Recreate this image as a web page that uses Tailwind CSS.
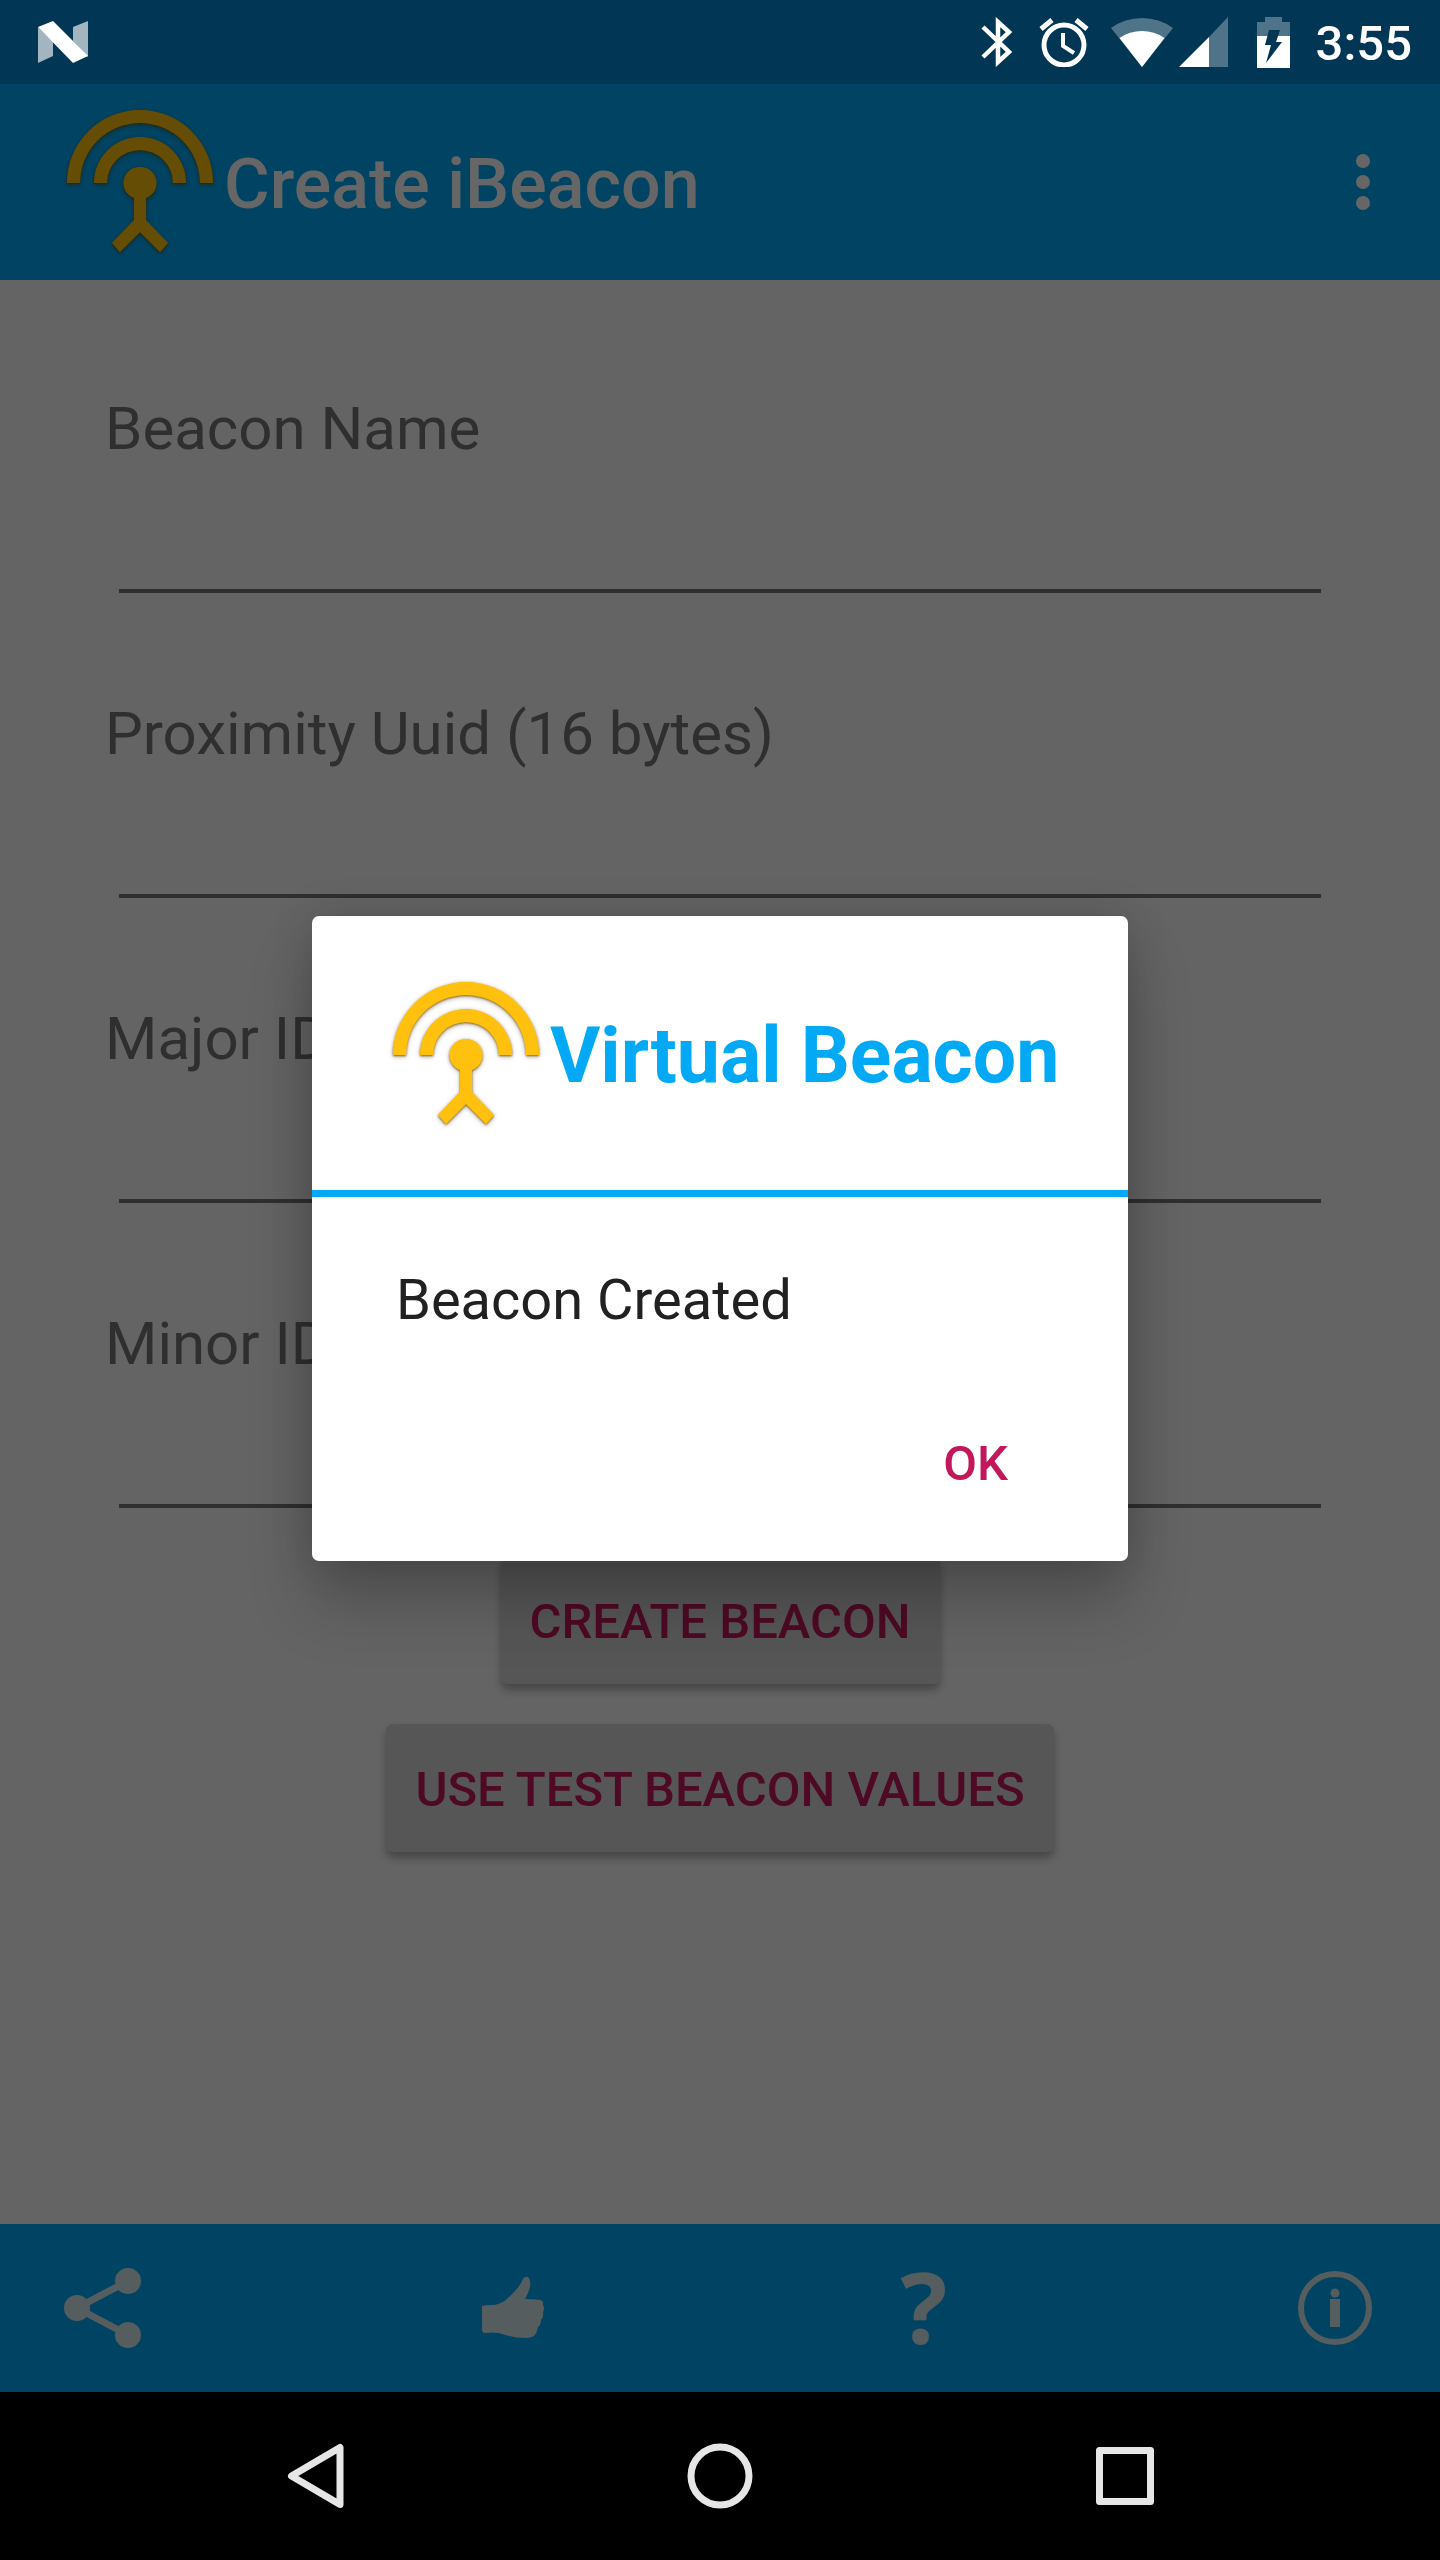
<!DOCTYPE html>
<html lang="en">
<head>
<meta charset="utf-8">
<meta name="viewport" content="width=device-width, initial-scale=1">
<title>Create iBeacon</title>
<script src="https://cdn.jsdelivr.net/npm/@tailwindcss/browser@4"></script>
</head>
<body class="flex min-h-screen flex-col bg-black font-[Roboto,sans-serif]">

<!-- Shared beacon logo -->
<svg class="absolute size-0" aria-hidden="true">
  <defs>
    <filter id="bevel" x="-10%" y="-10%" width="120%" height="120%">
      <feDropShadow dx="0" dy="1" stdDeviation="1" flood-color="#7a5200" flood-opacity=".9" result="edge"/>
      <feDropShadow in="edge" dx="0" dy="1" stdDeviation="2" flood-color="#000" flood-opacity=".3"/>
    </filter>
    <symbol id="beacon" viewBox="0 0 168 168">
      <g filter="url(#bevel)" fill="#ffc107">
        <path d="M11 85a73 73 0 0 1 146 0h-13a60 60 0 0 0-120 0zM38 85a46 46 0 0 1 92 0h-13a33 33 0 0 0-66 0z"/>
        <path d="M84 69a16 16 0 0 1 6 31v22l22 23-8 9-20-20-20 20-8-9 22-23v-22a16 16 0 0 1 6-31z"/>
      </g>
    </symbol>
  </defs>
</svg>

<header class="flex h-[84px] shrink-0 items-center bg-[#013654] pr-7 pl-[38px] text-white">
  <svg class="h-[42px] w-[50px]" viewBox="0 0 50 42" aria-label="Android N">
    <path fill="#a3b6c0" d="M0 6l15 15v14L0 42zM50 0v36L35 20V6z"/>
    <path fill="#fff" d="M0 6L15 0l35 35-15 7z"/>
  </svg>
  <svg class="ml-auto h-[50px] w-[32px]" viewBox="0 0 32 50" fill="none" stroke="#fff" stroke-width="4.5" aria-label="Bluetooth">
    <path d="M2 10l26 25-11 10V5l11 10L2 40"/>
  </svg>
  <svg class="ml-[26px] h-[50px] w-[50px]" viewBox="0 0 50 50" fill="none" stroke="#fff" stroke-width="5" aria-label="Alarm">
    <circle cx="25" cy="28" r="20"/><path stroke-width="4" d="M24 16v13l11 7"/><path d="M2 12L13 3M48 12L37 3"/>
  </svg>
  <svg class="ml-[22px] h-[50px] w-[62px]" viewBox="0 0 62 50" aria-label="Wi-Fi">
    <path fill="#4f7388" d="M0 11a53 53 0 0 1 62 0L31 50z"/><path fill="#fff" d="M8.500 21a40 40 0 0 1 45 0L31 50z"/>
  </svg>
  <svg class="ml-[6px] h-[50px] w-[50px]" viewBox="0 0 50 50" aria-label="Mobile signal">
    <path fill="#4f7388" d="M49 0v50H30V20z"/><path fill="#fff" d="M0 50l30-30v30z"/>
  </svg>
  <svg class="ml-7 h-[51px] w-[33px]" viewBox="0 0 33 51" aria-label="Battery charging">
    <path fill="#4f7388" d="M8 0h17v5h8v14H0V5h8z"/><path fill="#fff" d="M0 19h33v32H0z"/><path fill="#013654" d="M12 13h11l-4 12h6L9 46l5-18H8z"/>
  </svg>
  <time class="ml-[26px] pt-1 text-[49px] leading-[58px] font-medium">3:55</time>
</header>

<div class="relative flex grow flex-col bg-[#fafafa]">
  <div class="flex h-[196px] shrink-0 items-center bg-[#03a9f4] pr-9 pl-14">
    <svg class="size-[168px] shrink-0" aria-hidden="true"><use href="#beacon"/></svg>
    <h1 class="pt-1 text-[70px] leading-[82px] font-medium text-white">Create iBeacon</h1>
    <button type="button" class="ml-auto flex h-[84px] w-[82px] items-center justify-center" aria-label="More options">
      <svg class="h-[56px] w-[14px]" viewBox="0 0 14 56" fill="#fff"><circle cx="7" cy="7" r="7"/><circle cx="7" cy="28" r="7"/><circle cx="7" cy="49" r="7"/></svg>
    </button>
  </div>

  <form class="flex grow flex-col gap-[103px] px-[105px] pt-[111px] text-[#757575]">
    <div class="flex flex-col">
      <label for="name" class="text-[60px] leading-[76px]">Beacon Name</label>
      <input id="name" type="text" class="mx-3.5 h-[126px] border-b-4 border-[#757575] text-[60px] outline-none">
    </div>
    <div class="flex flex-col">
      <label for="uuid" class="text-[60px] leading-[76px]">Proximity Uuid (16 bytes)</label>
      <input id="uuid" type="text" class="mx-3.5 h-[126px] border-b-4 border-[#757575] text-[60px] outline-none">
    </div>
    <div class="flex flex-col">
      <label for="major" class="text-[60px] leading-[76px]">Major ID</label>
      <input id="major" type="text" class="mx-3.5 h-[126px] border-b-4 border-[#757575] text-[60px] outline-none">
    </div>
    <div class="flex flex-col">
      <label for="minor" class="text-[60px] leading-[76px]">Minor ID</label>
      <input id="minor" type="text" class="mx-3.5 h-[126px] border-b-4 border-[#757575] text-[60px] outline-none">
      <div class="mt-12 flex flex-col items-center gap-10 text-[49px] font-medium text-[#c2185b]">
        <button type="button" class="h-[128px] rounded-[7px] bg-[#d6d7d7] px-[29px] pt-1 shadow-[0_6px_8px_rgba(0,0,0,0.3)]">CREATE BEACON</button>
        <button type="button" class="h-[128px] rounded-[7px] bg-[#d6d7d7] px-[29px] pt-1 shadow-[0_6px_8px_rgba(0,0,0,0.3)]">USE TEST BEACON VALUES</button>
      </div>
    </div>
  </form>

  <div class="flex h-[168px] shrink-0 items-center justify-between bg-[#03a9f4] pr-[63px] pl-[60px] text-[#d4e8ea]">
    <button type="button" class="size-[84px]" aria-label="Share">
      <svg viewBox="0 0 84 84" fill="currentColor" class="size-full">
        <path d="M68 15L17 42l51 27" fill="none" stroke="currentColor" stroke-width="7"/>
        <circle cx="17" cy="42" r="13"/><circle cx="68" cy="15" r="13"/><circle cx="68" cy="69" r="13"/>
      </svg>
    </button>
    <button type="button" class="size-[84px]" aria-label="Like">
      <svg viewBox="0 0 84 84" fill="currentColor" class="size-full"><path d="M11 40q3-1 12-1 9-1 16-9 10-9 13-17 3-4 6-1 3 6-1 15l-3 6q9 0 15 1 4 1 3 5 2 4 0 7 1 5-2 8 0 5-3 7-1 5-3 8-3 3-9 3-14 0-27-5-6-1-14 0-3 0-3-4V45q0-4 0-5z"/></svg>
    </button>
    <button type="button" class="flex size-[84px] items-center justify-center pb-1 font-['Open_Sans',sans-serif] text-[98px] leading-[84px] font-bold" aria-label="Help">?</button>
    <button type="button" class="size-[84px]" aria-label="About">
      <svg viewBox="0 0 84 84" fill="currentColor" class="size-full"><circle cx="42" cy="42" r="34" fill="none" stroke="currentColor" stroke-width="6"/><circle cx="42" cy="27" r="4.500"/><path d="M37 33h10v28H37z"/></svg>
    </button>
  </div>

  <!-- Modal layer -->
  <div class="absolute inset-0 flex items-center justify-center bg-black/60">
    <section role="dialog" aria-modal="true" aria-labelledby="dialog-title" class="flex w-[816px] max-w-full flex-col rounded-[7px] bg-white shadow-[0_42px_64px_rgba(0,0,0,0.22),0_0_42px_rgba(0,0,0,0.15)]">
      <div class="flex items-center border-b-[7px] border-[#03a9f4] pt-[54px] pb-[52px] pl-[70px]">
        <svg class="size-[168px] shrink-0" aria-hidden="true"><use href="#beacon"/></svg>
        <h2 id="dialog-title" class="pt-1 text-[77px] leading-[90px] font-bold whitespace-nowrap text-[#03a9f4]">Virtual Beacon</h2>
      </div>
      <p class="px-[84px] pt-[70px] text-[56px] leading-[66px] text-[#212121]">Beacon Created</p>
      <div class="flex justify-end pt-[68px] pr-[92px] pb-[34px]">
        <button type="button" class="h-[126px] px-7 text-[49px] font-medium text-[#c2185b]">OK</button>
      </div>
    </section>
  </div>
</div>

<nav class="flex h-[168px] shrink-0 items-center justify-center gap-80 bg-black" aria-label="System navigation">
  <button type="button" class="size-[84px]" aria-label="Back"><svg viewBox="0 0 84 84" class="size-full" fill="none" stroke="#e6e6e6" stroke-width="7" stroke-linejoin="round"><path d="M66 13.500v57L17.500 42z"/></svg></button>
  <button type="button" class="size-[84px]" aria-label="Home"><svg viewBox="0 0 84 84" class="size-full" fill="none" stroke="#e6e6e6" stroke-width="7"><circle cx="42" cy="42" r="29"/></svg></button>
  <button type="button" class="size-[84px]" aria-label="Recent apps"><svg viewBox="0 0 84 84" class="size-full" fill="none" stroke="#e6e6e6" stroke-width="7" stroke-linejoin="round"><path d="M17.500 16.500h51v51h-51z"/></svg></button>
</nav>
</body>
</html>
